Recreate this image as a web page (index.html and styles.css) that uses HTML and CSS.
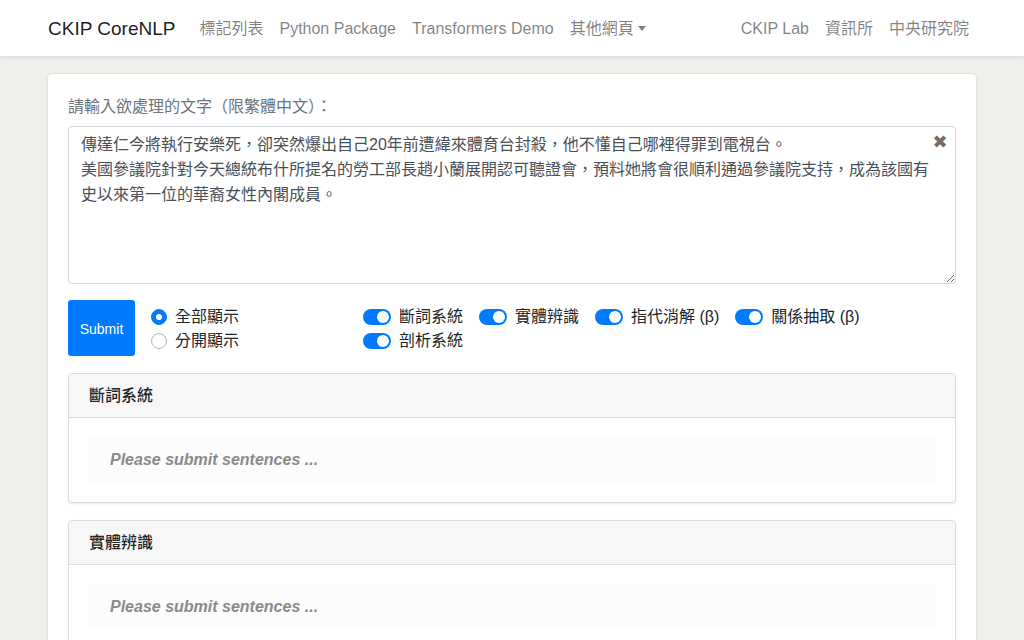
FILE: index.html
```html
<!DOCTYPE html>
<html lang="zh-Hant">
<head>
<meta charset="utf-8">
<title>CKIP CoreNLP</title>
<link rel="stylesheet" href="styles.css">
</head>
<body>
<nav class="navbar">
  <div class="container nav-inner">
    <a class="brand" href="#">CKIP CoreNLP</a>
    <ul class="nav">
      <li><a class="nav-link" href="#">標記列表</a></li>
      <li><a class="nav-link" href="#">Python Package</a></li>
      <li><a class="nav-link" href="#">Transformers Demo</a></li>
      <li><a class="nav-link dropdown" href="#">其他網頁<span class="caret"></span></a></li>
    </ul>
    <ul class="nav nav-right">
      <li><a class="nav-link" href="#">CKIP Lab</a></li>
      <li><a class="nav-link" href="#">資訊所</a></li>
      <li><a class="nav-link" href="#">中央研究院</a></li>
    </ul>
  </div>
</nav>

<main class="container">
  <div class="card main-card">
    <div class="card-body">
      <label class="input-label">請輸入欲處理的文字（限繁體中文）：</label>
      <div class="input-wrap">
        <textarea class="form-control" rows="6">傳達仁今將執行安樂死，卻突然爆出自己20年前遭緯來體育台封殺，他不懂自己哪裡得罪到電視台。
美國參議院針對今天總統布什所提名的勞工部長趙小蘭展開認可聽證會，預料她將會很順利通過參議院支持，成為該國有史以來第一位的華裔女性內閣成員。</textarea>
        <button class="clear-btn" type="button">&#x2716;</button>
      </div>

      <div class="options">
        <button class="btn-submit" type="button">Submit</button>
        <div class="radio-group">
          <div class="radio"><span class="radio-dot checked"></span>全部顯示</div>
          <div class="radio"><span class="radio-dot"></span>分開顯示</div>
        </div>
        <div class="switch-group">
          <div class="switch"><span class="track"><span class="knob"></span></span>斷詞系統</div>
          <div class="switch"><span class="track"><span class="knob"></span></span>實體辨識</div>
          <div class="switch"><span class="track"><span class="knob"></span></span>指代消解 (β)</div>
          <div class="switch"><span class="track"><span class="knob"></span></span>關係抽取 (β)</div>
          <div class="switch"><span class="track"><span class="knob"></span></span>剖析系統</div>
        </div>
      </div>

      <div class="results">
        <div class="card result-card">
          <div class="card-header">斷詞系統</div>
          <div class="result-body">
            <div class="placeholder">Please submit sentences ...</div>
          </div>
        </div>
        <div class="card result-card">
          <div class="card-header">實體辨識</div>
          <div class="result-body">
            <div class="placeholder">Please submit sentences ...</div>
          </div>
        </div>
      </div>
    </div>
  </div>
</main>
</body>
</html>
```

FILE: styles.css
```css
* { box-sizing: border-box; }

html, body {
  margin: 0;
  padding: 0;
}

body {
  background: #f0efeb;
  font-family: "Liberation Sans", "Noto Sans CJK TC", Arial, sans-serif;
  font-size: 16px;
  line-height: 24px;
  color: #212529;
}

.container {
  width: 960px;
  margin: 0 auto;
  padding: 0 15px;
}

/* Navbar */
.navbar {
  background: #fff;
  height: 56px;
  box-shadow: 0 1px 4px rgba(0, 0, 0, 0.12);
  position: relative;
  z-index: 1;
}

.nav-inner {
  display: flex;
  align-items: center;
  height: 56px;
  padding-left: 16px;
  padding-top: 1px;
}

.brand {
  font-size: 19px;
  line-height: 30px;
  color: rgba(0, 0, 0, 0.9);
  text-decoration: none;
  margin-right: 16px;
}

.nav {
  display: flex;
  list-style: none;
  margin: 0;
  padding: 0;
}

.nav-right {
  margin-left: auto;
}

.nav-link {
  display: block;
  padding: 8px;
  color: rgba(0, 0, 0, 0.5);
  text-decoration: none;
  font-size: 16px;
  line-height: 24px;
}

.caret {
  display: inline-block;
  margin-left: 4px;
  vertical-align: 3px;
  border-top: 5px solid rgba(0, 0, 0, 0.5);
  border-left: 4.5px solid transparent;
  border-right: 4.5px solid transparent;
}

/* Main card */
.main-card {
  margin-top: 17px;
  background: #fff;
  border: 1px solid #e4e3df;
  border-radius: 4px;
  box-shadow: 0 1px 3px rgba(0, 0, 0, 0.06);
}

.card-body {
  padding: 20px;
}

.input-label {
  display: block;
  color: #6c757d;
  margin-bottom: 8px;
  padding-top: 1px;
  height: 24px;
}

.input-wrap {
  position: relative;
}

.form-control {
  display: block;
  width: 100%;
  height: 158px;
  padding: 5px 12px 6px;
  font-family: "Liberation Sans", "Noto Sans CJK TC", Arial, sans-serif;
  font-size: 16px;
  line-height: 25px;
  color: #495057;
  border: 1px solid #ced4da;
  border-radius: 4px;
  background: #fff;
  resize: vertical;
  outline: none;
}

.clear-btn {
  position: absolute;
  top: 6px;
  right: 6px;
  border: 0;
  background: transparent;
  color: #6f6f6f;
  font-size: 18px;
  line-height: 20px;
  padding: 0;
  width: 20px;
  font-family: "DejaVu Sans", sans-serif;
}

/* Options */
.options {
  display: flex;
  align-items: center;
  margin-top: 16px;
}

.btn-submit {
  width: 67px;
  height: 56px;
  background: #007bff;
  color: #fff;
  border: 0;
  border-radius: 3px;
  font-family: "Liberation Sans", Arial, sans-serif;
  font-size: 14px;
  padding: 2px 0 0;
  margin-right: 16px;
}

.radio-group {
  width: 212px;
  padding-top: 2px;
}

.radio {
  display: flex;
  align-items: center;
  height: 24px;
}

.radio-dot {
  width: 16px;
  height: 16px;
  border-radius: 50%;
  border: 1px solid #adb5bd;
  background: #fff;
  margin-right: 8px;
  position: relative;
}

.radio-dot.checked {
  background: #007bff;
  border-color: #007bff;
}

.radio-dot.checked::after {
  content: "";
  position: absolute;
  left: 4px;
  top: 4px;
  width: 6px;
  height: 6px;
  border-radius: 50%;
  background: #fff;
}

.switch-group {
  display: flex;
  flex-wrap: wrap;
  width: 520px;
  padding-top: 2px;
}

.switch {
  display: flex;
  align-items: center;
  height: 24px;
  margin-right: 16px;
}

.track {
  width: 28px;
  height: 16px;
  border-radius: 8px;
  background: #007bff;
  margin-right: 8px;
  position: relative;
}

.knob {
  position: absolute;
  left: 14px;
  top: 2px;
  width: 12px;
  height: 12px;
  border-radius: 50%;
  background: #fff;
}

/* Results */
.results {
  margin-top: 17px;
}

.result-card {
  border: 1px solid #dcdcdc;
  border-radius: 4px;
  box-shadow: 0 1px 2px rgba(0, 0, 0, 0.08);
  margin-bottom: 17px;
  background: #fff;
  overflow: hidden;
}

.card-header {
  background: #f7f7f7;
  border-bottom: 1px solid #dcdcdc;
  padding: 9px 20px;
  line-height: 25px;
  font-weight: 500;
  color: #212529;
}

.result-body {
  padding: 20px 19px;
}

.placeholder {
  background: #fcfcfc;
  padding: 10px 22px;
  line-height: 24px;
  font-weight: bold;
  font-style: italic;
  color: #8a8a8a;
}
```
